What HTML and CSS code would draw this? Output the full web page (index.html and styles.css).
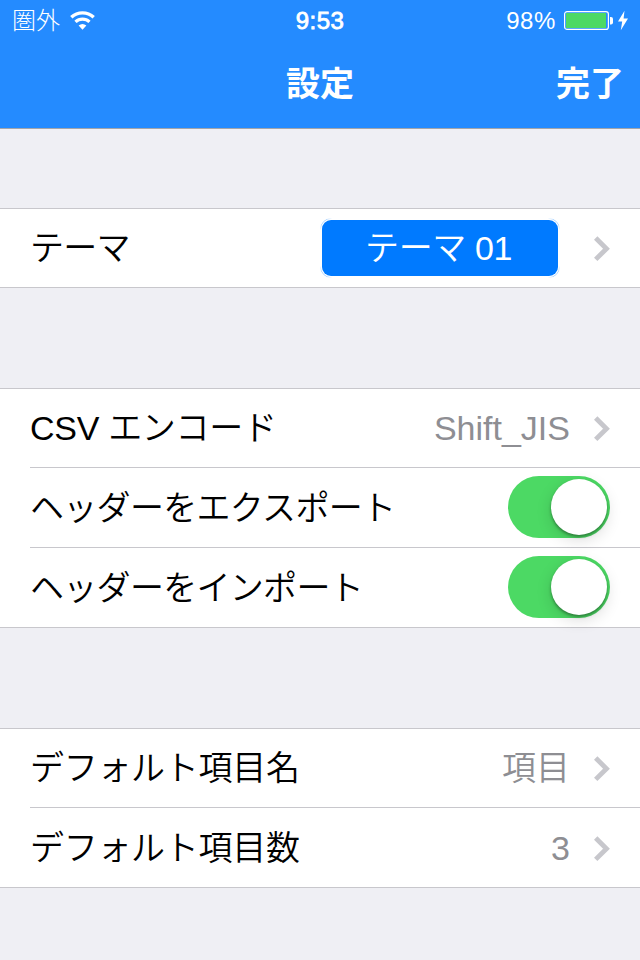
FILE: index.html
```html
<!DOCTYPE html>
<html lang="ja">
<head>
    <meta charset="UTF-8">
    <meta name="viewport" content="width=device-width, initial-scale=1.0">
    <title>設定</title>
    <link rel="stylesheet" href="styles.css">
</head>
<body>
    <header class="header">
        <div class="status-bar">
            <div class="status-left">
                <span class="carrier">圏外</span>
                <svg class="wifi" width="26" height="20" viewBox="0 0 26 20">
                    <path d="M1.3 6.3 A16.5 16.5 0 0 1 23.7 6.3" fill="none" stroke="#fff" stroke-width="3.4"/>
                    <path d="M5.5 10.9 A10.2 10.2 0 0 1 19.5 10.9" fill="none" stroke="#fff" stroke-width="3.2"/>
                    <path d="M8.6 14.6 A6 6 0 0 1 16.4 14.6 L12.5 18.8 Z" fill="#fff"/>
                </svg>
            </div>
            <span class="time">9:53</span>
            <div class="status-right">
                <span class="percent">98%</span>
                <svg class="battery" width="66" height="22" viewBox="0 0 66 22">
                    <rect x="0.6" y="1.6" width="43.8" height="17.8" rx="2.5" fill="none" stroke="#fff" stroke-width="1.2"/>
                    <rect x="2" y="3" width="40" height="15" fill="#4cd964"/>
                    <path d="M46 7 h1 a2 2 0 0 1 2 2 v3.5 a2 2 0 0 1 -2 2 h-1 z" fill="#fff"/>
                    <path d="M60.5 0.8 L54 11.6 H58.2 L56.8 20.2 L64 8.6 H59.6 Z" fill="#fff"/>
                </svg>
            </div>
        </div>
        <div class="nav-bar">
            <h1>設定</h1>
            <a class="done">完了</a>
        </div>
    </header>

    <main>
        <section class="group">
            <div class="row">
                <span class="label short">テーマ</span>
                <span class="theme">テーマ 01</span>
                <svg class="chevron" width="18" height="26" viewBox="0 0 18 26"><path d="M1.7 2 L12.5 12.7 L1.7 23.4"/></svg>
            </div>
        </section>

        <section class="group">
            <div class="row">
                <span class="label">CSV エンコード</span>
                <span class="value latin">Shift_JIS</span>
                <svg class="chevron" width="18" height="26" viewBox="0 0 18 26"><path d="M1.7 2 L12.5 12.7 L1.7 23.4"/></svg>
            </div>
            <div class="row">
                <span class="label tight">ヘッダーをエクスポート</span>
                <span class="switch"><span class="knob"></span></span>
            </div>
            <div class="row">
                <span class="label tight">ヘッダーをインポート</span>
                <span class="switch"><span class="knob"></span></span>
            </div>
        </section>

        <section class="group">
            <div class="row">
                <span class="label">デフォルト項目名</span>
                <span class="value">項目</span>
                <svg class="chevron" width="18" height="26" viewBox="0 0 18 26"><path d="M1.7 2 L12.5 12.7 L1.7 23.4"/></svg>
            </div>
            <div class="row">
                <span class="label">デフォルト項目数</span>
                <span class="value latin">3</span>
                <svg class="chevron" width="18" height="26" viewBox="0 0 18 26"><path d="M1.7 2 L12.5 12.7 L1.7 23.4"/></svg>
            </div>
        </section>
    </main>
</body>
</html>
```
FILE: styles.css
```css
* {
    box-sizing: border-box;
}

body {
    margin: 0;
    height: 960px;
    overflow: hidden;
    background: #efeff4;
    color: #000;
    font-family: "Liberation Sans", "Noto Sans CJK JP", sans-serif;
    font-size: 34px;
}

/* Header */
.header {
    height: 129px;
    background: #248bff;
    border-bottom: 1px solid #a2a5aa;
    color: #fff;
}

.status-bar {
    display: grid;
    grid-template-columns: 1fr auto 1fr;
    align-items: center;
    height: 41px;
    padding: 0 11px 0 11px;
    font-size: 24px;
    line-height: 42px;
}

.status-left,
.status-right {
    display: flex;
    align-items: center;
}

.status-left {
    gap: 10px;
    padding-left: 1px;
}

.status-right {
    justify-content: flex-end;
    gap: 8px;
    margin-right: -1px;
}

.carrier {
    font-weight: 300;
}

.time {
    letter-spacing: 0.4px;
    -webkit-text-stroke: 0.8px #fff;
}

.percent {
    letter-spacing: 0.6px;
}

.nav-bar {
    display: grid;
    grid-template-columns: 1fr auto 1fr;
    align-items: center;
    height: 82px;
    padding-right: 17px;
    padding-left: 17px;
    font-family: "Noto Sans CJK JP", sans-serif;
    line-height: 82px;
}

.nav-bar h1 {
    grid-column: 2;
    margin: 0;
    font-size: 34px;
    font-weight: bold;
}

.done {
    justify-self: end;
    margin-right: -1px;
    font-weight: bold;
}

/* Table groups */
.group {
    margin-top: 100px;
    padding-left: 30px;
    background: #fff;
    border-top: 1px solid #c8c7cc;
    border-bottom: 1px solid #c8c7cc;
}

.group:first-child {
    margin-top: 79px;
}

.row {
    display: flex;
    align-items: center;
    height: 80px;
    padding-right: 30px;
    border-bottom: 1px solid #c8c7cc;
    line-height: 78px;
}

.row:first-child {
    height: 79px;
}

.row:last-child {
    height: 79px;
    border-bottom: none;
}

.row:first-child:last-child {
    height: 78px;
}

.label {
    flex: 1;
    font-weight: 350;
    letter-spacing: -0.3px;
    white-space: nowrap;
}

.label.short {
    letter-spacing: -0.8px;
}

.label.tight {
    letter-spacing: -0.7px;
}

.value {
    color: #8e8e93;
    font-weight: 350;
}

.value.latin {
    margin-right: 1px;
    margin-left: -1px;
}

.chevron {
    margin: 2px -2px 0 24px;
    fill: none;
    stroke: #c7c7cc;
    stroke-width: 4.8;
}

.value.latin + .chevron {
    margin-left: 23px;
}

.theme {
    position: relative;
    width: 236px;
    height: 56px;
    margin-right: 12px;
    padding-right: 3px;
    border-radius: 9px;
    background: #007aff;
    color: #fff;
    font-weight: 350;
    letter-spacing: -0.4px;
    line-height: 56px;
    text-align: center;
}

/* Thin arcs outside the corners */
.theme::after {
    content: "";
    position: absolute;
    inset: -2px;
    border: 1px solid #a9d2ff;
    border-radius: 11px;
    mask: radial-gradient(circle at 0 0, #000 6px, transparent 12px),
        radial-gradient(circle at 100% 0, #000 6px, transparent 12px),
        radial-gradient(circle at 0 100%, #000 6px, transparent 12px),
        radial-gradient(circle at 100% 100%, #000 6px, transparent 12px);
}

/* Switches */
.switch {
    display: flex;
    justify-content: flex-end;
    align-items: center;
    width: 102px;
    height: 62px;
    margin-bottom: 2px;
    padding-right: 3px;
    border-radius: 31px;
    background: #4cd964;
}

.knob {
    width: 56px;
    height: 56px;
    border-radius: 50%;
    background: #fff;
    box-shadow: 0 2px 3px rgba(0, 0, 0, 0.35), 0 5px 16px rgba(0, 0, 0, 0.14);
}
```
